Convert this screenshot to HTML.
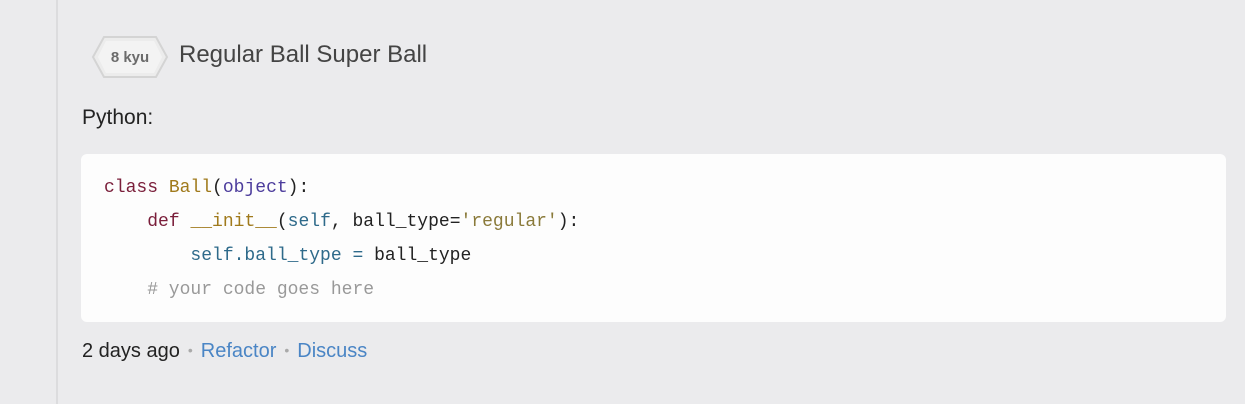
<!DOCTYPE html>
<html><head><style>
body{margin:0;width:1245px;height:404px;background:#ebebed;font-family:"Liberation Sans",sans-serif;position:relative;overflow:hidden}
.vl{position:absolute;left:56px;top:0;width:2px;height:404px;background:#dcdcde}
.badge{position:absolute;left:91px;top:35px}
.title{position:absolute;left:179px;top:41px;font-size:24px;color:#444;}
.lang{position:absolute;left:82px;top:106px;font-size:21px;color:#222}
.code{position:absolute;left:81px;top:154px;width:1145px;height:168px;background:#fdfdfd;border-radius:6px}
.ln{position:absolute;left:104px;font-family:"Liberation Mono",monospace;font-size:18px;white-space:pre;color:#222;line-height:24px}
.foot{position:absolute;left:82px;top:340px;font-size:20px;color:#222}
.foot a{color:#4a85c5;text-decoration:none}
.dot{color:#aaa;font-size:14px;margin:0 8px;vertical-align:2px}
</style></head><body>
<div class="vl"></div>
<svg class="badge" width="78" height="44" viewBox="0 0 78 44"><polygon points="13,2 65,2 76,22 65,42 13,42 2,22" fill="#ececec" stroke="#d4d4d4" stroke-width="2"/><polygon points="15,6 63,6 71,22 63,38 15,38 7,22" fill="#f3f3f3"/><text x="39" y="27" text-anchor="middle" font-family="Liberation Sans" font-weight="bold" font-size="15" fill="#6b6b6b">8 kyu</text></svg>
<div class="title">Regular Ball Super Ball</div>
<div class="lang">Python:</div>
<div class="code"></div>
<div class="ln" style="top:176px"><span style="color:#7a1e3a">class</span> <span style="color:#a07a1c">Ball</span>(<span style="color:#4c3c9c">object</span>):</div>
<div class="ln" style="top:210px">    <span style="color:#7a1e3a">def</span> <span style="color:#a07a1c">__init__</span>(<span style="color:#2e6a8a">self</span>, ball_type=<span style="color:#8a7a3a">'regular'</span>):</div>
<div class="ln" style="top:244px">        <span style="color:#2e6a8a">self.ball_type = </span>ball_type</div>
<div class="ln" style="top:278px;color:#999">    # your code goes here</div>
<div class="foot">2 days ago<span class="dot">•</span><a>Refactor</a><span class="dot">•</span><a>Discuss</a></div>
</body></html>
